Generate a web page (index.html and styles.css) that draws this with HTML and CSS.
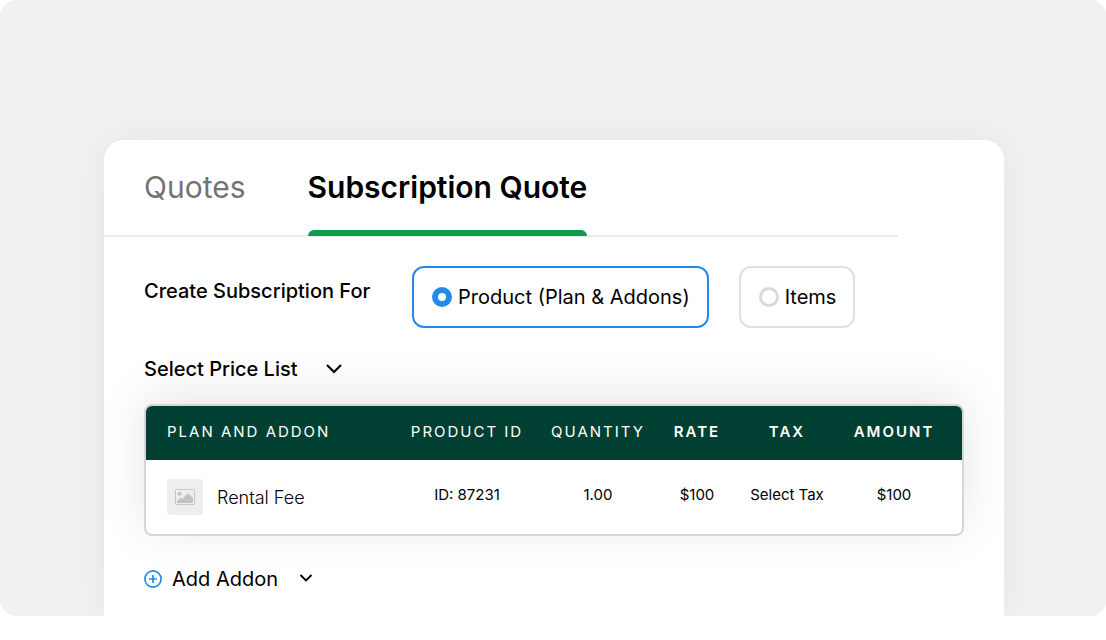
FILE: index.html
```html
<!DOCTYPE html>
<html lang="en">
<head>
  <meta charset="UTF-8">
  <meta name="viewport" content="width=device-width, initial-scale=1.0">
  <title>Subscription Quote</title>
  <link rel="stylesheet" href="styles.css">
</head>
<body>

  <main class="stage">
    <section class="card">

      <nav class="tabs">
        <a class="tab" href="#quotes">Quotes</a>
        <a class="tab active" href="#subscription">Subscription Quote</a>
      </nav>

      <form class="content">
        <fieldset class="create-for">
          <legend class="label">Create Subscription For</legend>
          <div class="options">
            <label class="option">
              <input type="radio" name="type" value="product" checked>
              <span>Product (Plan &amp; Addons)</span>
            </label>
            <label class="option">
              <input type="radio" name="type" value="items">
              <span>Items</span>
            </label>
          </div>
        </fieldset>

        <button class="price-list" type="button">
          Select Price List
          <svg width="18" height="12" viewBox="0 0 18 12"><path d="M2 2l7 7 7-7" fill="none" stroke="#000" stroke-width="2.2"/></svg>
        </button>

        <div class="table-box">
          <table>
            <colgroup>
              <col>
              <col class="c-id">
              <col class="c-qty">
              <col class="c-rate">
              <col class="c-tax">
              <col class="c-amount">
            </colgroup>
            <thead>
              <tr>
                <th>Plan and Addon</th>
                <th>Product ID</th>
                <th>Quantity</th>
                <th class="strong">Rate</th>
                <th class="strong">Tax</th>
                <th class="strong">Amount</th>
              </tr>
            </thead>
            <tbody>
              <tr>
                <td>
                  <div class="plan">
                    <span class="thumb">
                      <svg width="20" height="16" viewBox="0 0 20 16">
                        <rect x="0.5" y="0.5" width="19" height="15" rx="1" fill="none" stroke="#c3c7c5"/>
                        <circle cx="4.5" cy="4.7" r="2" fill="#bfc4c1"/>
                        <path d="M2 14v-1.500l3.500-4 2 1.500L12.500 4l1.500 2 1-.5L18 9.500V14z" fill="#bfc4c1"/>
                      </svg>
                    </span>
                    Rental Fee
                  </div>
                </td>
                <td>ID: 87231</td>
                <td>1.00</td>
                <td>$100</td>
                <td>Select Tax</td>
                <td>$100</td>
              </tr>
            </tbody>
          </table>
        </div>

        <button class="add-addon" type="button">
          <svg width="18" height="18" viewBox="0 0 18 18"><g fill="none" stroke="#2489ea"><circle cx="9" cy="9" r="8.1" stroke-width="1.700"/><path d="M9 5v8M5 9h8" stroke-width="1.700"/></g></svg>
          <span>Add Addon</span>
          <svg width="14" height="10" viewBox="0 0 14 10"><path d="M1.500 1L7 6.500 12.500 1" fill="none" stroke="#000" stroke-width="1.800"/></svg>
        </button>
      </form>

    </section>
  </main>

</body>
</html>
```
FILE: styles.css
```css
* {
  box-sizing: border-box;
}

body {
  margin: 0;
  background: #fff;
  color: #000;
  font-family: Inter, "Liberation Sans", sans-serif;
}

.stage {
  padding: 140px 102px 0 104px;
  background: #f1f1f1;
  border-radius: 16px;
  overflow: hidden;
}

.card {
  background: #fff;
  border-radius: 20px 20px 0 0;
  box-shadow: 0 0 40px rgba(0, 0, 0, 0.06);
}

.tabs {
  display: flex;
  gap: 62px;
  height: 97px;
  margin-right: 106px;
  padding-left: 40px;
  border-bottom: 2px solid #ebebeb;
}

.tab {
  height: 96px;
  padding-top: 29px;
  border-bottom: 6px solid transparent;
  color: #737373;
  font-size: 30px;
  font-weight: 400;
  line-height: 36px;
  text-decoration: none;
  white-space: nowrap;
}

.tab.active {
  position: relative;
  color: #000;
  font-weight: 600;
}

.tab.active::after {
  content: "";
  position: absolute;
  left: 0;
  right: 0;
  bottom: -6px;
  height: 6px;
  border-radius: 6px 6px 0 0;
  background: #0f9b4e;
}

.content {
  padding: 29px 40px 25px;
}

.create-for {
  display: flex;
  margin: 0;
  padding: 0;
  border: 0;
}

.label {
  float: left;
  width: 268px;
  padding: 13px 0 0;
  font-size: 20px;
  font-weight: 500;
  line-height: 24px;
}

.options {
  display: flex;
  gap: 30px;
}

.option {
  display: flex;
  align-items: center;
  gap: 6px;
  height: 62px;
  padding: 0 17px 0 18px;
  border: 2px solid #e0e0e0;
  border-radius: 12px;
  font-size: 20px;
  white-space: nowrap;
}

.option:has(input:checked) {
  border-color: #2489ea;
}

.option input {
  appearance: none;
  width: 20px;
  height: 20px;
  margin: 0;
  border: 3px solid #d9d9d9;
  border-radius: 50%;
}

.option input:checked {
  border: 6px solid #2489ea;
}

.price-list,
.add-addon {
  display: flex;
  align-items: center;
  position: relative;
  z-index: 1;
  padding: 0;
  border: 0;
  background: none;
  color: #000;
  font: 400 20px/24px Inter, "Liberation Sans", sans-serif;
  cursor: pointer;
}

.price-list {
  gap: 27px;
  margin: 29px 0 23px;
  font-weight: 500;
}

.table-box {
  border: 2px solid #d6d6d6;
  border-radius: 8px;
  background: #fff;
  box-shadow: 0 -8px 50px rgba(0, 0, 0, 0.1);
  overflow: hidden;
}

table {
  width: 100%;
  table-layout: fixed;
  border-collapse: collapse;
}

.c-id { width: 130px; }
.c-qty { width: 132px; }
.c-rate { width: 66px; }
.c-tax { width: 114px; }
.c-amount { width: 118px; }

th {
  height: 54px;
  padding: 0 0 4px;
  background: #003f31;
  color: #fff;
  font-size: 15px;
  font-weight: 400;
  letter-spacing: 2px;
  text-transform: uppercase;
  white-space: nowrap;
}

th.strong {
  font-weight: 600;
}

td {
  height: 74px;
  padding: 0 0 6px;
  font-size: 15px;
  font-weight: 400;
  text-align: center;
  white-space: nowrap;
}

th:first-child,
td:first-child {
  padding-left: 21px;
  text-align: left;
}

th:last-child,
td:last-child {
  padding-right: 18px;
}

td:first-child {
  padding-bottom: 0;
}

.plan {
  display: flex;
  align-items: center;
  gap: 14px;
  font-size: 18px;
  font-weight: 300;
}

.thumb {
  display: flex;
  align-items: center;
  justify-content: center;
  width: 36px;
  height: 36px;
  border-radius: 3px;
  background: #eee;
}

.add-addon {
  gap: 10px;
  margin-top: 31px;
}

.add-addon span {
  margin-right: 11px;
}
```
